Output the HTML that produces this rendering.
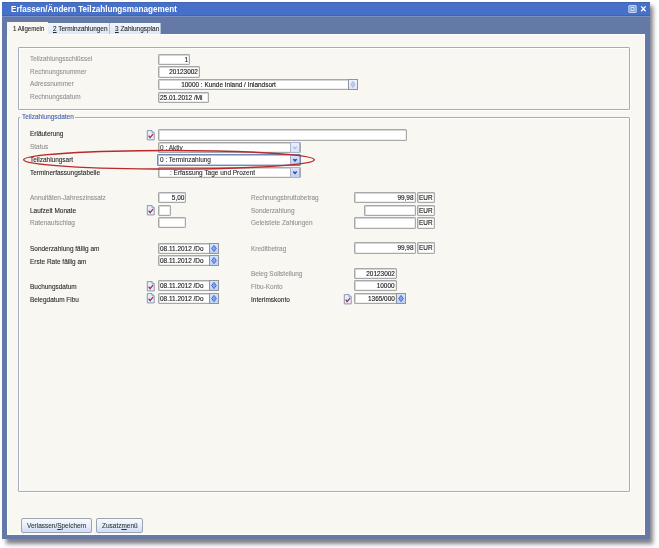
<!DOCTYPE html>
<html><head><meta charset="utf-8">
<style>
*{margin:0;padding:0;box-sizing:border-box}
html,body{width:659px;height:548px;background:#fff;overflow:hidden;position:relative;font-family:"Liberation Sans",sans-serif}
.a{position:absolute}
#shadow{left:6px;top:6px;width:647px;height:538px;background:#6c6a72;filter:blur(2.2px);opacity:.85}
#win{left:2px;top:2px;width:648px;height:537px;background:#6479a6}
#bandhl{left:2px;top:16px;width:648px;height:1px;background:#7b90c2}
#title{left:2px;top:2px;width:648px;height:14px;background:#4771c8;border-top:1px solid #4066b4;border-bottom:1px solid #3e64b6}
#ttext{left:11px;top:2.8px;font-size:8.9px;font-weight:bold;color:#fff;white-space:nowrap;line-height:12px;transform-origin:0 50%;transform:scaleX(.915)}
#client{left:7px;top:34px;width:638px;height:501px;background:#f8f7f2;border-right:1px solid #fff;border-left:1px solid #fff;border-bottom:1px solid #fff;border-top:1px solid #fdfdfb}
.tab{position:absolute;top:23px;height:11px;background:linear-gradient(#f4f7fc,#dce7f6);border-right:1px solid #aebdd6}
.tabact{position:absolute;left:7px;top:22px;width:41px;height:13px;background:#f8f7f2}
.t{position:absolute;white-space:nowrap;font-size:7.4px;line-height:9px;transform-origin:0 50%;transform:scaleX(.875);color:#262626;-webkit-text-stroke:.1px currentColor}
.g{color:#909090}
.box{position:absolute;background:#fff;border:1px solid #a8a8a8;border-radius:1px;box-shadow:inset 1px 1px 0 #d6d6d6,inset -1px -1px 0 #ececec}
.grp{position:absolute;border:1px solid #a6abbf;border-radius:1px;box-shadow:1px 1px 0 #fff,inset 1px 1px 0 #fff}
.fv{position:absolute;white-space:nowrap;font-size:7.4px;line-height:9px;color:#1a1a1a;transform:scaleX(.87);-webkit-text-stroke:.15px currentColor}
.r{transform-origin:100% 50%}
.l{transform-origin:0 50%}
.btn{position:absolute;border:1px solid #9ea3ad;border-radius:2px;background:linear-gradient(#f6f9fe,#e6edfa 55%,#cfdcf5)}
</style></head><body>
<div class="a" id="shadow"></div>
<div class="a" id="win"></div>
<div class="a" id="title"></div>
<div class="a" id="bandhl"></div>
<div class="a" id="ttext">Erfassen/Ändern Teilzahlungsmanagement</div>
<svg class="a" style="left:626px;top:3px" width="24" height="12" viewBox="0 0 24 12">
<rect x="2.8" y="2.6" width="7.4" height="6.8" rx="1" fill="rgba(255,255,255,.22)" stroke="rgba(235,242,255,.75)" stroke-width="1.1"/>
<rect x="4.9" y="4.6" width="3.2" height="2.8" fill="none" stroke="rgba(255,255,255,.8)" stroke-width=".9"/>
<path d="M15.2 3.4 L19.6 8.2 M19.6 3.4 L15.2 8.2" stroke="#fff" stroke-width="1.35"/>
</svg>
<div class="a" id="client"></div>
<div class="tabact"></div>
<div class="tab" style="left:48px;width:62px"></div>
<div class="tab" style="left:110px;width:51px"></div>
<div class="t" style="left:13px;top:24px;color:#1c1c1c;transform:scaleX(.82)">1 Allgemein</div>
<div class="t" style="left:53px;top:24.4px;"><u>2</u> Terminzahlungen</div>
<div class="t" style="left:115px;top:24.4px;"><u>3</u> Zahlungsplan</div>
<div class="grp" style="left:18px;top:47px;width:612px;height:63px"></div>
<div class="t g" style="left:30px;top:54px;">Teilzahlungsschlüssel</div>
<div class="t g" style="left:30px;top:67px;">Rechnungsnummer</div>
<div class="t g" style="left:30px;top:79px;">Adressnummer</div>
<div class="t g" style="left:30px;top:92px;">Rechnungsdatum</div>
<div class="box" style="left:158px;top:54px;width:32px;height:11px;"></div>
<div class="fv r" style="right:471px;top:55px;">1</div>
<div class="box" style="left:158px;top:66px;width:42px;height:12px;"></div>
<div class="fv r" style="right:461px;top:67px;">20123002</div>
<div class="box" style="left:158px;top:79px;width:200px;height:11px;"></div>
<div class="fv r" style="right:383px;top:80px;">10000 : Kunde Inland / Inlandsort</div>
<div class="a" style="left:348px;top:79px;width:10px;height:11px;background:linear-gradient(#eef2fc,#dfe6f8);border:1px solid #8f949c"></div>
<svg class="a" style="left:348px;top:79px" width="10" height="11" viewBox="0 0 10 11">
<path d="M5 2.4 L7.0 5.5 L5 8.6 L3.0 5.5 Z" fill="#c3cdf2" stroke="#a9b5e2" stroke-width=".9"/>
</svg>
<div class="box" style="left:158px;top:92px;width:51px;height:11px;"></div>
<div class="fv l" style="left:160px;top:93px;">25.01.2012 /Mi</div>
<div class="grp" style="left:18px;top:117px;width:612px;height:375px"></div>
<div class="a" style="left:20px;top:113px;width:55px;height:8px;background:#f8f7f2"></div>
<div class="t" style="left:22px;top:112px;color:#4862b0;-webkit-text-stroke:.12px #4862b0">Teilzahlungsdaten</div>
<div class="t" style="left:30px;top:129px;">Erläuterung</div>
<div class="t g" style="left:30px;top:142px;">Status</div>
<div class="t" style="left:30px;top:155px;">Teilzahlungsart</div>
<div class="t" style="left:30px;top:168px;">Terminerfassungstabelle</div>
<svg class="a" style="left:146px;top:130px" width="9" height="11" viewBox="0 0 9 11">
<path d="M1.3 0.6 H6 L8.2 2.8 V9.9 H1.3 Z" fill="#e6f0fa" stroke="#7a8fb0" stroke-width=".9"/>
<path d="M6 0.6 V2.8 H8.2" fill="#c2d2ea" stroke="#7a8fb0" stroke-width=".7"/>
<path d="M2.7 5.6 L4.1 7.7 L7 4.1" fill="none" stroke="#b42446" stroke-width="1.25"/>
</svg>
<div class="box" style="left:158px;top:129px;width:249px;height:12px;"></div>
<div class="box" style="left:158px;top:142px;width:143px;height:11px;"></div>
<div class="a" style="left:290px;top:142px;width:10px;height:11px;background:linear-gradient(#e9eefa,#dbe3f6);border:1px solid #a7b3cf"></div>
<svg class="a" style="left:290px;top:142px" width="10" height="11" viewBox="0 0 10 11">
<path d="M3.2 4.7 L5 6.7 L6.8 4.7" fill="none" stroke="#a9b9dc" stroke-width="1.2"/>
</svg>
<div class="t" style="left:160px;top:143px;color:#333;">0 : Aktiv</div>
<div class="box" style="left:157px;top:154px;width:144px;height:12px;border-color:#7189b2;box-shadow:inset 1px 1px 0 #b4c2da,inset -1px -1px 0 #c4cfe2"></div>
<div class="a" style="left:290px;top:155px;width:10px;height:10px;background:linear-gradient(#d9e3f9,#c0d0f3);border:1px solid #a7b3cf"></div>
<svg class="a" style="left:290px;top:155px" width="10" height="10" viewBox="0 0 10 10">
<path d="M3.2 4.2 L5 6.2 L6.8 4.2" fill="#2f4f9a" stroke="#2f4f9a" stroke-width="1.2"/>
</svg>
<div class="t" style="left:160px;top:155px;">0 : Terminzahlung</div>
<div class="box" style="left:158px;top:167px;width:143px;height:11px;"></div>
<div class="a" style="left:290px;top:167px;width:10px;height:11px;background:linear-gradient(#d9e3f9,#c0d0f3);border:1px solid #a7b3cf"></div>
<svg class="a" style="left:290px;top:167px" width="10" height="11" viewBox="0 0 10 11">
<path d="M3.2 4.7 L5 6.7 L6.8 4.7" fill="#2f4f9a" stroke="#2f4f9a" stroke-width="1.2"/>
</svg>
<div class="t" style="left:170px;top:168px;">: Erfassung Tage und Prozent</div>
<div class="t g" style="left:30px;top:193px;">Annuitäten-Jahreszinssatz</div>
<div class="t" style="left:30px;top:206px;">Laufzeit Monate</div>
<div class="t g" style="left:30px;top:218px;">Ratenaufschlag</div>
<div class="box" style="left:158px;top:192px;width:28px;height:11px;"></div>
<div class="fv r" style="right:475px;top:193px;">5,00</div>
<svg class="a" style="left:146px;top:205px" width="9" height="11" viewBox="0 0 9 11">
<path d="M1.3 0.6 H6 L8.2 2.8 V9.9 H1.3 Z" fill="#e6f0fa" stroke="#7a8fb0" stroke-width=".9"/>
<path d="M6 0.6 V2.8 H8.2" fill="#c2d2ea" stroke="#7a8fb0" stroke-width=".7"/>
<path d="M2.7 5.6 L4.1 7.7 L7 4.1" fill="none" stroke="#b42446" stroke-width="1.25"/>
</svg>
<div class="box" style="left:158px;top:205px;width:13px;height:11px;"></div>
<div class="box" style="left:158px;top:217px;width:28px;height:11px;"></div>
<div class="t" style="left:30px;top:244px;">Sonderzahlung fällig am</div>
<div class="t" style="left:30px;top:257px;">Erste Rate fällig am</div>
<div class="t" style="left:30px;top:282px;">Buchungsdatum</div>
<div class="t" style="left:30px;top:295px;">Belegdatum Fibu</div>
<div class="box" style="left:158px;top:243px;width:61px;height:11px;"></div>
<div class="fv l" style="left:160px;top:244px;">08.11.2012 /Do</div>
<div class="a" style="left:209px;top:243px;width:10px;height:11px;background:linear-gradient(#d6e3fa,#bfd2f5);border:1px solid #8f949c"></div>
<svg class="a" style="left:209px;top:243px" width="10" height="11" viewBox="0 0 10 11">
<path d="M5 2.4 L7.3 5.5 L5 8.6 L2.7 5.5 Z" fill="#86a6ea" stroke="#3d64c6" stroke-width=".9"/>
</svg>
<div class="box" style="left:158px;top:255px;width:61px;height:11px;"></div>
<div class="fv l" style="left:160px;top:256px;">08.11.2012 /Do</div>
<div class="a" style="left:209px;top:255px;width:10px;height:11px;background:linear-gradient(#d6e3fa,#bfd2f5);border:1px solid #8f949c"></div>
<svg class="a" style="left:209px;top:255px" width="10" height="11" viewBox="0 0 10 11">
<path d="M5 2.4 L7.3 5.5 L5 8.6 L2.7 5.5 Z" fill="#86a6ea" stroke="#3d64c6" stroke-width=".9"/>
</svg>
<div class="box" style="left:158px;top:280px;width:61px;height:11px;"></div>
<div class="fv l" style="left:160px;top:281px;">08.11.2012 /Do</div>
<div class="a" style="left:209px;top:280px;width:10px;height:11px;background:linear-gradient(#d6e3fa,#bfd2f5);border:1px solid #8f949c"></div>
<svg class="a" style="left:209px;top:280px" width="10" height="11" viewBox="0 0 10 11">
<path d="M5 2.4 L7.3 5.5 L5 8.6 L2.7 5.5 Z" fill="#86a6ea" stroke="#3d64c6" stroke-width=".9"/>
</svg>
<div class="box" style="left:158px;top:293px;width:61px;height:11px;"></div>
<div class="fv l" style="left:160px;top:294px;">08.11.2012 /Do</div>
<div class="a" style="left:209px;top:293px;width:10px;height:11px;background:linear-gradient(#d6e3fa,#bfd2f5);border:1px solid #8f949c"></div>
<svg class="a" style="left:209px;top:293px" width="10" height="11" viewBox="0 0 10 11">
<path d="M5 2.4 L7.3 5.5 L5 8.6 L2.7 5.5 Z" fill="#86a6ea" stroke="#3d64c6" stroke-width=".9"/>
</svg>
<svg class="a" style="left:146px;top:281px" width="9" height="11" viewBox="0 0 9 11">
<path d="M1.3 0.6 H6 L8.2 2.8 V9.9 H1.3 Z" fill="#e6f0fa" stroke="#7a8fb0" stroke-width=".9"/>
<path d="M6 0.6 V2.8 H8.2" fill="#c2d2ea" stroke="#7a8fb0" stroke-width=".7"/>
<path d="M2.7 5.6 L4.1 7.7 L7 4.1" fill="none" stroke="#b42446" stroke-width="1.25"/>
</svg>
<svg class="a" style="left:146px;top:293px" width="9" height="11" viewBox="0 0 9 11">
<path d="M1.3 0.6 H6 L8.2 2.8 V9.9 H1.3 Z" fill="#e6f0fa" stroke="#7a8fb0" stroke-width=".9"/>
<path d="M6 0.6 V2.8 H8.2" fill="#c2d2ea" stroke="#7a8fb0" stroke-width=".7"/>
<path d="M2.7 5.6 L4.1 7.7 L7 4.1" fill="none" stroke="#b42446" stroke-width="1.25"/>
</svg>
<div class="t g" style="left:251px;top:193px;">Rechnungsbruttobetrag</div>
<div class="t g" style="left:251px;top:206px;">Sonderzahlung</div>
<div class="t g" style="left:251px;top:218px;">Geleistete Zahlungen</div>
<div class="t g" style="left:251px;top:244px;">Kreditbetrag</div>
<div class="t g" style="left:251px;top:269px;">Beleg Sollstellung</div>
<div class="t g" style="left:251px;top:282px;">Fibu-Konto</div>
<div class="t" style="left:251px;top:295px;">Interimskonto</div>
<div class="box" style="left:354px;top:192px;width:62px;height:11px;"></div>
<div class="fv r" style="right:246px;top:193px;">99,98</div>
<div class="box" style="left:417px;top:192px;width:18px;height:11px;"></div>
<div class="fv l" style="left:419px;top:193px;">EUR</div>
<div class="box" style="left:364px;top:205px;width:52px;height:11px;"></div>
<div class="box" style="left:417px;top:205px;width:18px;height:11px;"></div>
<div class="fv l" style="left:419px;top:206px;">EUR</div>
<div class="box" style="left:354px;top:217px;width:62px;height:12px;"></div>
<div class="box" style="left:417px;top:217px;width:18px;height:12px;"></div>
<div class="fv l" style="left:419px;top:218px;">EUR</div>
<div class="box" style="left:354px;top:242px;width:62px;height:12px;"></div>
<div class="fv r" style="right:246px;top:243px;">99,98</div>
<div class="box" style="left:417px;top:242px;width:18px;height:12px;"></div>
<div class="fv l" style="left:419px;top:243px;">EUR</div>
<div class="box" style="left:354px;top:268px;width:43px;height:11px;"></div>
<div class="fv r" style="right:264px;top:269px;">20123002</div>
<div class="box" style="left:354px;top:280px;width:43px;height:11px;"></div>
<div class="fv r" style="right:264px;top:281px;">10000</div>
<svg class="a" style="left:343px;top:294px" width="9" height="11" viewBox="0 0 9 11">
<path d="M1.3 0.6 H6 L8.2 2.8 V9.9 H1.3 Z" fill="#e6f0fa" stroke="#7a8fb0" stroke-width=".9"/>
<path d="M6 0.6 V2.8 H8.2" fill="#c2d2ea" stroke="#7a8fb0" stroke-width=".7"/>
<path d="M2.7 5.6 L4.1 7.7 L7 4.1" fill="none" stroke="#b42446" stroke-width="1.25"/>
</svg>
<div class="box" style="left:354px;top:293px;width:43px;height:11px;"></div>
<div class="fv r" style="right:264px;top:294px;">1365/000</div>
<div class="a" style="left:396px;top:293px;width:10px;height:11px;background:linear-gradient(#d6e3fa,#bfd2f5);border:1px solid #8f949c"></div>
<svg class="a" style="left:396px;top:293px" width="10" height="11" viewBox="0 0 10 11">
<path d="M5 2.4 L7.3 5.5 L5 8.6 L2.7 5.5 Z" fill="#86a6ea" stroke="#3d64c6" stroke-width=".9"/>
</svg>
<div class="btn" style="left:21px;top:518px;width:71px;height:15px"></div>
<div class="btn" style="left:96px;top:518px;width:47px;height:15px"></div>
<div class="t" style="left:27px;top:521px;color:#30363f;">Verlassen/<u>S</u>peichern</div>
<div class="t" style="left:102px;top:521px;color:#30363f;">Zusatz<u>m</u>enü</div>
<svg class="a" style="left:0;top:0" width="659" height="548">
<ellipse cx="169" cy="159.8" rx="145.4" ry="9.3" fill="none" stroke="#b82a2c" stroke-width="1.5"/>
</svg>
</body></html>
